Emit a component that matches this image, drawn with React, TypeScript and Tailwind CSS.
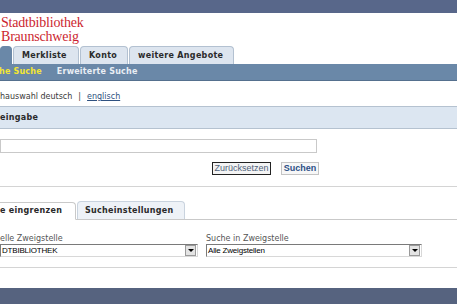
const Tab = ({ label, w, active }: { label: string; w: string; active?: boolean }) => (
  <div
    className={`${w} h-[18px] flex items-center pl-[8px] rounded-t-[4px] border border-b-0 ${
      active ? "bg-[#6a88a8] border-[#6a88a8]" : "bg-[#dde5ef] border-[#b3c1d1]"
    } font-bold text-[#2b2b2b] tracking-[0.3px]`}
  >
    {label}
  </div>
);

const Select = ({ value, w }: { value: string; w: string }) => (
  <div className={`${w} h-[13px] flex items-center border border-t-[#7a7a7a] border-l-[#7a7a7a] border-r-[#d8d8d8] border-b-[#d8d8d8] bg-white`}>
    <span className="flex-1 pl-[1px] font-['Liberation_Sans',sans-serif] text-[8px] text-black tracking-[-0.2px]">
      {value}
    </span>
    <div className="w-[11px] h-[11px] mr-[1px] bg-[#e4e4e4] border border-[#9a9a9a] flex items-center justify-center">
      <div className="w-0 h-0 border-l-[3px] border-r-[3px] border-t-[3px] border-l-transparent border-r-transparent border-t-black" />
    </div>
  </div>
);

export default function App() {
  return (
    <div className="w-[457px] h-[304px] overflow-hidden bg-white flex flex-col font-['DejaVu_Sans',sans-serif] text-[8px] text-[#333]">
      <div className="h-[13px] bg-[#58678a] shrink-0" />

      <div className="pt-[3px] pl-[1px] font-['Liberation_Serif',serif] text-[14px] leading-[14px] text-[#cc1f30] tracking-[-0.2px]">
        <div>Stadtbibliothek</div>
        <div>Braunschweig</div>
      </div>

      <div className="mt-[2px] flex items-end gap-[1px] h-[18px]">
        <Tab label="" w="w-[12px]" active />
        <Tab label="Merkliste" w="w-[66px]" />
        <Tab label="Konto" w="w-[48px]" />
        <Tab label="weitere Angebote" w="w-[105px]" />
      </div>

      <div className="h-[17px] bg-[#6a88a8] border-b border-[#55708e] flex items-center font-bold tracking-[0.2px]">
        <span className="text-[#f3e633] -ml-[1px]">he Suche</span>
        <span className="ml-[15px] text-[#e9eef4]">Erweiterte Suche</span>
      </div>

      <div className="h-[25px] flex items-end pb-[3px] text-[#3a3a3a]">
        <span>hauswahl deutsch</span>
        <span className="mx-[6px]">|</span>
        <span className="text-[#2f5180] underline">englisch</span>
      </div>

      <div className="h-[23px] bg-[#dce6f1] border-y border-[#b5c2d0] flex items-center font-bold text-[#2a2a2a] tracking-[0.3px]">
        eingabe
      </div>

      <div className="pt-[10px] pb-[11px] border-b border-[#d4d4d4] flex flex-col">
        <div className="w-[317px] h-[14px] border border-[#c9c9c9] bg-white" />
        <div className="mt-[9px] flex gap-[10px] pl-[212px]">
          <button className="w-[59px] h-[13px] border border-[#222] bg-[#f4f4f4] font-['Liberation_Sans',sans-serif] text-[9px] text-[#50627a] leading-none">
            Zurücksetzen
          </button>
          <button className="w-[38px] h-[13px] border border-[#c4c4c4] bg-[#f7f7f7] font-['Liberation_Sans',sans-serif] font-bold text-[9px] text-[#2c4f86] leading-none">
            Suchen
          </button>
        </div>
      </div>

      <div className="mt-[15px] flex items-end h-[18px] border-b border-[#c9c9c9]">
        <div className="w-[76px] h-[18px] -mb-[1px] bg-white border border-l-0 border-[#c9c9c9] border-b-white rounded-tr-[4px] flex items-center font-bold text-[#2a2a2a] tracking-[0.3px]">
          e eingrenzen
        </div>
        <div className="w-[108px] h-[18px] ml-[1px] bg-[#eef2f7] border border-b-0 border-[#c9d3de] rounded-t-[4px] flex items-center pl-[7px] font-bold text-[#2a2a2a] tracking-[0.3px]">
          Sucheinstellungen
        </div>
      </div>

      <div className="pt-[13px] pb-[10px] border-b border-[#d4d4d4] flex text-[#555]">
        <div className="w-[206px] flex flex-col">
          <span className="leading-[11px]">elle Zweigstelle</span>
          <Select value="DTBIBLIOTHEK" w="w-[198px]" />
        </div>
        <div className="flex flex-col">
          <span className="leading-[11px]">Suche in Zweigstelle</span>
          <Select value="Alle Zweigstellen" w="w-[216px]" />
        </div>
      </div>

      <div className="flex-1" />
      <div className="h-[16px] bg-[#56637f] shrink-0" />
    </div>
  );
}
